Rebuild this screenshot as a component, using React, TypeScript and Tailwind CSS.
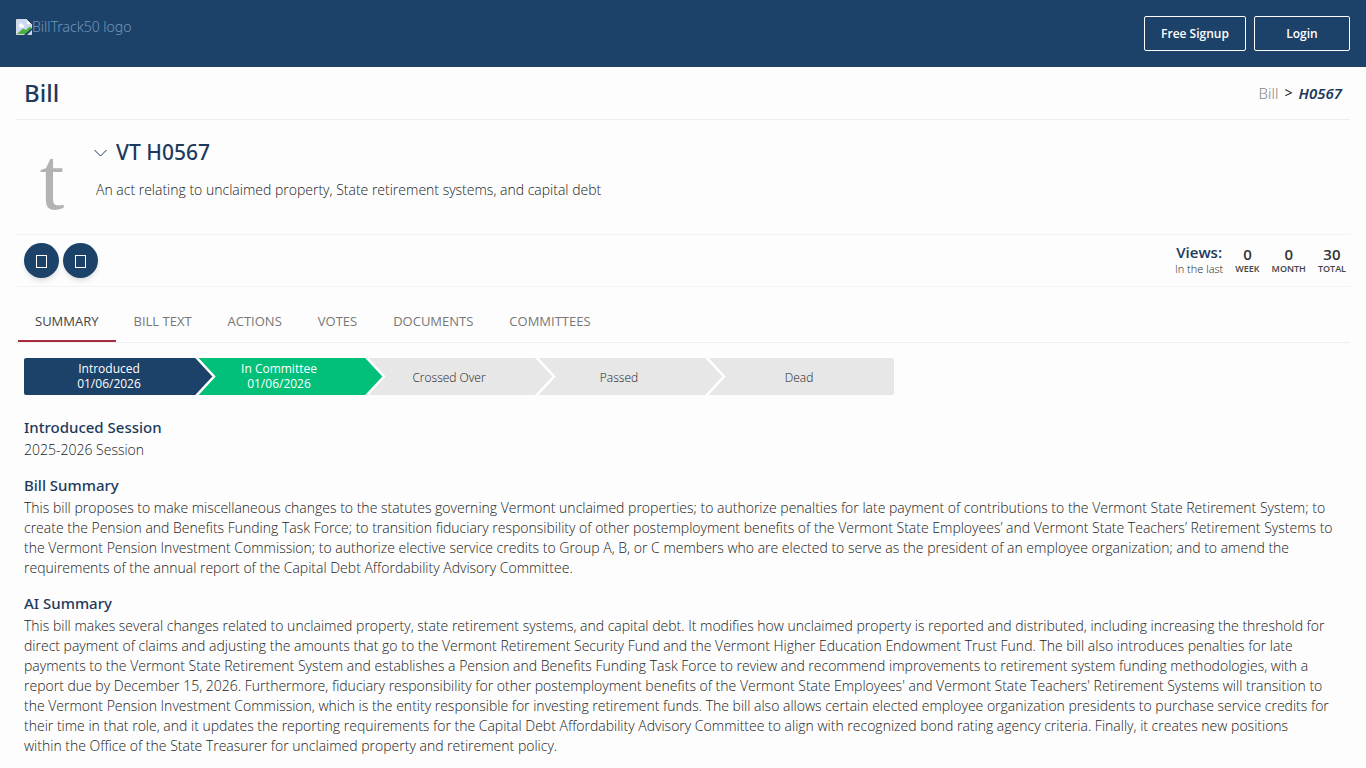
import clsx from "clsx";

type TSection = {
  title: string;
  text: string;
};

type TStage = {
  label: string;
  date?: string;
  color: "navy" | "green" | "gray";
};

const TABS = [
  "Summary",
  "Bill Text",
  "Actions",
  "Votes",
  "Documents",
  "Committees",
];

const VIEWS = [
  { count: 0, label: "WEEK" },
  { count: 0, label: "MONTH" },
  { count: 30, label: "TOTAL" },
];

const STAGES: TStage[] = [
  { label: "Introduced", date: "01/06/2026", color: "navy" },
  { label: "In Committee", date: "01/06/2026", color: "green" },
  { label: "Crossed Over", color: "gray" },
  { label: "Passed", color: "gray" },
  { label: "Dead", color: "gray" },
];

const SECTIONS: TSection[] = [
  { title: "Introduced Session", text: "2025-2026 Session" },
  {
    title: "Bill Summary",
    text: "This bill proposes to make miscellaneous changes to the statutes governing Vermont unclaimed properties; to authorize penalties for late payment of contributions to the Vermont State Retirement System; to create the Pension and Benefits Funding Task Force; to transition fiduciary responsibility of other postemployment benefits of the Vermont State Employees’ and Vermont State Teachers’ Retirement Systems to the Vermont Pension Investment Commission; to authorize elective service credits to Group A, B, or C members who are elected to serve as the president of an employee organization; and to amend the requirements of the annual report of the Capital Debt Affordability Advisory Committee.",
  },
  {
    title: "AI Summary",
    text: "This bill makes several changes related to unclaimed property, state retirement systems, and capital debt. It modifies how unclaimed property is reported and distributed, including increasing the threshold for direct payment of claims and adjusting the amounts that go to the Vermont Retirement Security Fund and the Vermont Higher Education Endowment Trust Fund. The bill also introduces penalties for late payments to the Vermont State Retirement System and establishes a Pension and Benefits Funding Task Force to review and recommend improvements to retirement system funding methodologies, with a report due by December 15, 2026. Furthermore, fiduciary responsibility for other postemployment benefits of the Vermont State Employees' and Vermont State Teachers' Retirement Systems will transition to the Vermont Pension Investment Commission, which is the entity responsible for investing retirement funds. The bill also allows certain elected employee organization presidents to purchase service credits for their time in that role, and it updates the reporting requirements for the Capital Debt Affordability Advisory Committee to align with recognized bond rating agency criteria. Finally, it creates new positions\nwithin the Office of the State Treasurer for unclaimed property and retirement policy.",
  },
];

function BrokenImage() {
  return (
    <svg width="16" height="16" viewBox="0 0 16 16" aria-hidden="true">
      <path d="M0.5 0.5h10l5 5v10h-15z" fill="#c9d8f6" stroke="#d5d9e0" />
      <path d="M10.5 0.5v5h5z" fill="#fff" stroke="#d5d9e0" />
      <path d="M3 6.500a2 2 0 0 1 4 -.5a1.500 1.500 0 0 1 1 2.500h-5z" fill="#fff" />
      <path d="M1 15l6-5.500 3 1.500 3-3 2 0v3l-5 4z" fill="#4caf3f" />
      <path d="M8 16l8-7v2l-5 5z" fill="#1d4269" />
    </svg>
  );
}

function Stage({ stage, index }: { stage: TStage; index: number }) {
  const last = index === STAGES.length - 1;
  return (
    <li
      className={clsx(
        "relative flex h-[37px] flex-col items-center justify-center text-xs leading-[15px]",
        last ? "w-[190px]" : "w-[170px]",
        index === 0 && "rounded-l-xs",
        last && "rounded-r-xs",
        stage.color === "navy" && "bg-[#1d4269] pb-0.5 font-medium text-white",
        stage.color === "green" && "bg-[#02bf79] pb-0.5 font-medium text-white",
        stage.color === "gray" && "bg-[#e7e7e7] pt-0.5 text-[#222]"
      )}
    >
      <span>{stage.label}</span>
      {stage.date && <span>{stage.date}</span>}
      {!last && (
        <svg
          className={clsx(
            "absolute top-0 left-full z-10",
            stage.color === "navy" && "text-[#1d4269]",
            stage.color === "green" && "text-[#02bf79]",
            stage.color === "gray" && "text-[#e7e7e7]"
          )}
          width="22"
          height="37"
          viewBox="0 0 22 37"
          aria-hidden="true"
        >
          <path d="M0 0H2L19 18.500L2 37H0z" fill="currentColor" />
          <path d="M2 -1L20 18.500L2 38" fill="none" stroke="#fff" strokeWidth="2.500" />
        </svg>
      )}
    </li>
  );
}

export default function App() {
  return (
    <div className="bg-[#fdfdfd] font-['Open_Sans','Noto_Sans',sans-serif] text-sm font-light text-[#222]">
      <header className="flex items-start justify-between bg-[#1d4269] p-4">
        <a href="#" className="flex items-center pt-px font-['Noto_Sans',sans-serif] text-[#7096bd]">
          <BrokenImage />
          BillTrack50 logo
        </a>
        <div className="flex gap-2">
          <button className="h-[35px] w-[102px] rounded-xs border border-white text-xs font-semibold text-white">
            Free Signup
          </button>
          <button className="h-[35px] w-24 rounded-xs border border-white text-xs font-semibold text-white">
            Login
          </button>
        </div>
      </header>

      <main className="px-4">
        <div className="flex h-[53px] items-center justify-between border-b border-[#eee] px-2">
          <h1 className="font-['Noto_Sans',sans-serif] text-2xl font-medium text-[#1d3a5c]">
            Bill
          </h1>
          <nav
            className="flex items-center gap-1.5 pt-px font-['Noto_Sans',sans-serif] text-[15px]"
            aria-label="Breadcrumb"
          >
            <a href="#" className="text-[#888]">
              Bill
            </a>
            <span className="text-sm font-normal">&gt;</span>
            <span className="font-semibold text-[#1d3a5c] italic">H0567</span>
          </nav>
        </div>

        <section className="flex h-[115px] border-b border-[#f3f3f3] px-2">
          <div className="flex w-[68px] shrink-0 justify-center pt-5 pr-3 font-['Liberation_Serif',serif] text-[88px] leading-[80px] font-normal text-[#b3b3b3]">
            t
          </div>
          <div className="pt-5">
            <h2>
              <button className="flex items-center gap-2 font-['Noto_Sans',sans-serif] text-[21px] leading-6 font-medium text-[#1d3a5c]">
                <svg
                  width="16"
                  height="16"
                  viewBox="0 0 16 16"
                  fill="none"
                  stroke="currentColor"
                  aria-hidden="true"
                >
                  <path d="M2.500 6l6 6 6-6" />
                </svg>
                VT H0567
              </button>
            </h2>
            <p className="pt-4 pl-1 leading-5">
              An act relating to unclaimed property, State retirement systems,
              and capital debt
            </p>
          </div>
        </section>

        <section className="flex h-[52px] items-center justify-between border-b border-[#f3f3f3] pr-1 pl-2">
          <div className="flex gap-1">
            {["Follow", "Share"].map((label) => (
              <button
                key={label}
                aria-label={label}
                className="flex size-[35px] items-center justify-center rounded-full bg-[#1d4269] shadow-md"
              >
                <span className="mt-0.5 h-[13px] w-[11px] border border-white" />
              </button>
            ))}
          </div>
          <div className="flex gap-3 pb-px text-center">
            <div>
              <div className="text-[15px] leading-[18px] font-semibold text-[#1d3a5c]">
                Views:
              </div>
              <div className="text-[11px] leading-4">In the last</div>
            </div>
            {VIEWS.map((view) => (
              <div key={view.label} className="pt-0.5">
                <div className="text-[15px] leading-[18px] font-semibold text-[#333]">
                  {view.count}
                </div>
                <div className="text-[9px] leading-3 font-semibold text-[#444]">
                  {view.label}
                </div>
              </div>
            ))}
          </div>
        </section>

        <nav className="flex border-b border-[#eee] pt-[13px] pl-0.5" aria-label="Bill">
          {TABS.map((tab, i) => (
            <a
              key={tab}
              href="#"
              className={clsx(
                "border-b-2 pt-[11px] pb-[9px] text-[13px] leading-5 font-medium uppercase",
                i === 0
                  ? "border-[#a92b42] px-[17px] text-[#444]"
                  : "border-transparent px-[18px] text-[#777]"
              )}
            >
              {tab}
            </a>
          ))}
        </nav>

        <ol className="flex px-2 pt-[15px]">
          {STAGES.map((stage, i) => (
            <Stage key={stage.label} stage={stage} index={i} />
          ))}
        </ol>

        <div className="flex flex-col gap-3.5 px-2 pt-[21px] pb-4">
          {SECTIONS.map((section) => (
            <section key={section.title}>
              <h3 className="font-['Noto_Sans',sans-serif] text-[15px] leading-[22px] font-medium text-[#1d3a5c]">
                {section.title}
              </h3>
              <p className="pt-0.5 leading-5 whitespace-pre-line">{section.text}</p>
            </section>
          ))}
        </div>
      </main>
    </div>
  );
}
